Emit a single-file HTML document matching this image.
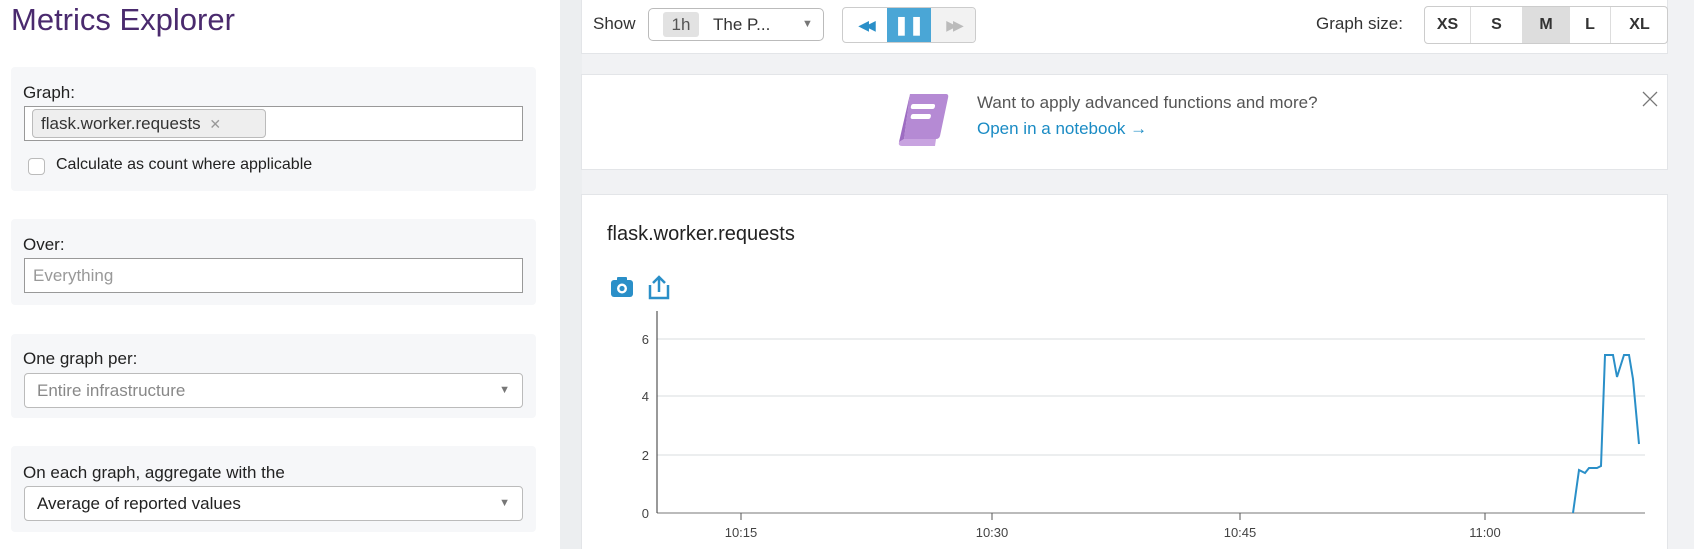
<!DOCTYPE html>
<html style="width:1694px;height:549px;overflow:hidden;background:#f1f2f4"><head><style>
*{box-sizing:border-box;margin:0;padding:0}
body{width:1694px;height:549px;overflow:hidden;background:#f1f2f4;font-family:"Liberation Sans",sans-serif;position:relative;color:#333}
.a{position:absolute}
#left{left:0;top:0;width:560px;height:549px;background:#fff}
.box{position:absolute;left:11px;width:525px;background:#f6f7f9;border-radius:4px}
.lbl{position:absolute;left:12px;font-size:17px;color:#222}
.inp{position:absolute;left:13px;width:499px;background:#fff;border:1px solid #999}
.sel{position:absolute;left:13px;width:499px;background:#fff;border:1px solid #bbb;border-radius:4px;font-size:17px;padding-left:12px}
.arr{position:absolute;right:12px;top:0;line-height:33px;font-size:11px;color:#777}
.card{position:absolute;left:581px;width:1087px;background:#fff;border:1px solid #e3e5e8}
.gs{position:absolute;top:0;height:100%;border-left:1px solid #ddd;font-weight:bold;font-size:16px;text-align:center;line-height:36px;color:#333}
</style></head><body>
<div id="left" class="a">
<div class="a" style="left:11px;top:0;font-size:31px;color:#4a2a6e;line-height:40px">Metrics Explorer</div>
<div class="box" style="top:67px;height:124px">
<div class="lbl" style="top:16px">Graph:</div>
<div class="inp" style="top:39px;height:35px">
<div class="a" style="left:7px;top:2px;width:234px;height:29px;background:#eee;border:1px solid #bbb;border-radius:4px;font-size:17px;line-height:27px;padding-left:8px">flask.worker.requests <span style="color:#999;font-size:14px;margin-left:4px">✕</span></div>
</div>
<div class="a" style="left:17px;top:91px;width:17px;height:17px;border:1px solid #bbb;border-radius:4px;background:#fff"></div>
<div class="a" style="left:45px;top:89px;font-size:16px;color:#222">Calculate as count where applicable</div>
</div>
<div class="box" style="top:219px;height:86px">
<div class="lbl" style="top:16px">Over:</div>
<div class="inp" style="top:39px;height:35px;font-size:17px;color:#999;padding:7px 8px">Everything</div>
</div>
<div class="box" style="top:334px;height:84px">
<div class="lbl" style="top:15px">One graph per:</div>
<div class="sel" style="top:39px;height:35px;line-height:33px;color:#888">Entire infrastructure<span class="arr">▼</span></div>
</div>
<div class="box" style="top:446px;height:86px">
<div class="lbl" style="top:17px">On each graph, aggregate with the</div>
<div class="sel" style="top:40px;height:35px;line-height:33px;color:#222">Average of reported values<span class="arr">▼</span></div>
</div>
</div>
<div class="a" style="left:560px;top:0;width:22px;height:549px;background:#eceef0"></div>

<div class="card" style="top:-1px;height:55px">
<div class="a" style="left:11px;top:14px;font-size:17px">Show</div>
<div class="a" style="left:66px;top:8px;width:176px;height:33px;border:1px solid #bbb;border-radius:5px;font-size:17px;line-height:31px">
<span class="a" style="left:14px;top:3px;width:36px;height:25px;background:#e2e2e2;border-radius:3px;line-height:25px;text-align:center;color:#555">1h</span>
<span class="a" style="left:64px">The P...</span><span class="a" style="left:153px;font-size:11px;color:#777">▼</span></div>
<div class="a" style="left:260px;top:7px;width:134px;height:36px;border:1px solid #ccc;border-radius:4px;overflow:hidden;background:#fff">
<div class="a" style="left:0;top:0;width:44px;height:34px;color:#2a8fc8;font-size:14px;text-align:center;line-height:34px;letter-spacing:-4px">◀◀</div>
<div class="a" style="left:44px;top:0;width:44px;height:34px;background:#4aa6d6;color:#fff;font-weight:bold;text-align:center;line-height:34px;font-size:18px">❚❚</div>
<div class="a" style="left:88px;top:0;width:44px;height:34px;background:#f2f2f2;color:#bbb;font-size:14px;text-align:center;line-height:34px;letter-spacing:-4px">▶▶</div>
</div>
<div class="a" style="left:734px;top:14px;font-size:17px">Graph size:</div>
<div class="a" style="left:842px;top:6px;width:244px;height:38px;border:1px solid #ccc;border-radius:4px;overflow:hidden">
<div class="gs" style="left:0;width:45px;border:0">XS</div>
<div class="gs" style="left:45px;width:52px">S</div>
<div class="gs" style="left:97px;width:47px;background:#ddd">M</div>
<div class="gs" style="left:144px;width:41px">L</div>
<div class="gs" style="left:185px;width:58px">XL</div>
</div>
</div>

<div class="card" style="top:74px;height:96px">
<svg class="a" style="left:314px;top:17px" width="58" height="56" viewBox="0 0 58 56">
<path d="M14 2 H50 Q53 2 52 6 L44 44 Q43 47 40 47 H8 Z" fill="#b58ad4"/>
<path d="M8 47 H40 L39 54 H6 Q2 54 3 50 Z" fill="#c8a3e0"/>
<path d="M3 50 L14 2 L8 47 Z" fill="#9d6cc2"/>
<rect x="18" y="12" width="24" height="5" rx="2" fill="#fff" transform="skewX(-12)"/>
<rect x="20" y="22" width="20" height="5" rx="2" fill="#fff" transform="skewX(-12)"/>
</svg>
<div class="a" style="left:395px;top:18px;font-size:17px;color:#555">Want to apply advanced functions and more?</div>
<div class="a" style="left:395px;top:44px;font-size:17px;color:#1a8bc4">Open in a notebook →</div>
<svg class="a" style="left:1060px;top:16px" width="16" height="16"><path d="M1 1 L15 15 M15 1 L1 15" stroke="#777" stroke-width="1.3"/></svg>
</div>

<div class="card" style="top:194px;height:360px">
<div class="a" style="left:25px;top:28px;font-size:20px;color:#222">flask.worker.requests</div>
<svg class="a" style="left:28px;top:80px" width="70" height="26" viewBox="0 0 70 26">
<rect x="1" y="5" width="22" height="17" rx="3" fill="#2a8fc8"/><rect x="7" y="2" width="10" height="5" rx="1" fill="#2a8fc8"/>
<circle cx="12" cy="13.5" r="5" fill="#fff"/><circle cx="12" cy="13.5" r="2.6" fill="#2a8fc8"/>
<path d="M40 10 V23 H58 V10" fill="none" stroke="#2a8fc8" stroke-width="2.5"/>
<path d="M49 17 V2 M43 8 L49 2 L55 8" fill="none" stroke="#2a8fc8" stroke-width="2.5"/>
</svg>
<svg class="a" style="left:0;top:0" width="1087" height="360">
<g stroke="#eceeef" stroke-width="2"><line x1="75" y1="144" x2="1063" y2="144"/><line x1="75" y1="201" x2="1063" y2="201"/><line x1="75" y1="260" x2="1063" y2="260"/></g>
<line x1="75" y1="318" x2="1063" y2="318" stroke="#bbb" stroke-width="2"/>
<line x1="75" y1="116" x2="75" y2="318" stroke="#333" stroke-width="1"/>
<g stroke="#555"><line x1="159" y1="318" x2="159" y2="325"/><line x1="410" y1="318" x2="410" y2="325"/><line x1="658" y1="318" x2="658" y2="325"/><line x1="903" y1="318" x2="903" y2="325"/></g>
<g font-family="Liberation Sans" font-size="13" fill="#444" text-anchor="end"><text x="67" y="149">6</text><text x="67" y="206">4</text><text x="67" y="265">2</text><text x="67" y="323">0</text></g>
<g font-family="Liberation Sans" font-size="13" fill="#444" text-anchor="middle"><text x="159" y="342">10:15</text><text x="410" y="342">10:30</text><text x="658" y="342">10:45</text><text x="903" y="342">11:00</text></g>
<polyline fill="none" stroke="#2a8fc8" stroke-width="2" points="991,318 997,275 1003,278 1007,273 1015,273 1019,271 1023,160 1031,160 1035,182 1042,160 1047,160 1051,184 1057,249"/>
</svg>
</div>
</body></html>
